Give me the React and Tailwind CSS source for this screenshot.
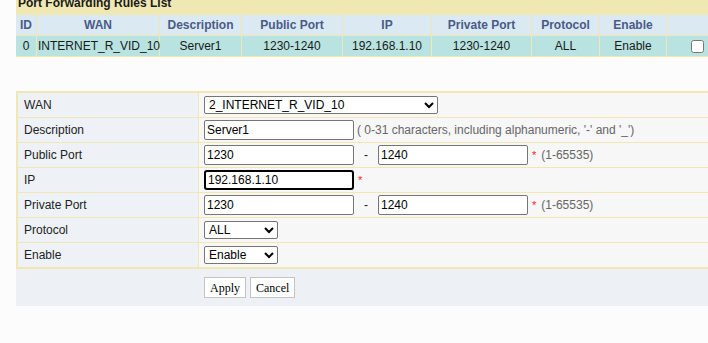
import React from 'react';

const cols = 'grid grid-cols-[21px_123px_82px_101px_89px_100px_68px_67px_60px]';
const heads = ['ID', 'WAN', 'Description', 'Public Port', 'IP', 'Private Port', 'Protocol', 'Enable', ''];
const cells = ['0', 'INTERNET_R_VID_10', 'Server1', '1230-1240', '192.168.1.10', '1230-1240', 'ALL', 'Enable'];

function Row({ label, children }) {
   return (
      <div className="grid grid-cols-[181px_1fr] h-[25px] border-b border-[#f0e7b4]">
         <div className="bg-[#eef2f7] border-r border-[#f0e7b4] flex items-center pl-[6px] text-[#222]">{label}</div>
         <div className="bg-[#f7f7f7] flex items-center pl-[5px]">{children}</div>
      </div>
   );
}

const input = 'h-[20px] bg-white border border-[#767676] rounded-[2px] px-[2px] text-[12px] text-black outline-none';
const select = 'h-[18px] bg-white border border-[#767676] rounded-[2px] text-[12px] text-black';

function Star() {
   return <span className="text-[#ff2020] text-[11px] ml-[4px] leading-none self-start mt-[7px]">*</span>;
}

export default function App() {
   return (
      <div className="min-h-screen w-full overflow-hidden bg-[#fcfcfc] text-[12px] text-[#1a1a1a]" style={{ fontFamily: '"Liberation Sans", Arial, sans-serif' }}>
         <div className="pl-[16px] w-[745px]">
            {/* --- Rules list --- */}
            <div className="bg-[#f0e8b3] h-[15px] overflow-hidden border-b border-[#f0e7b4]">
               <div className="font-bold leading-[14px] -mt-[4px] pl-[2px]">Port Forwarding Rules List</div>
            </div>
            <div className={`${cols} h-[21px] bg-[#dbeaf2] border-b border-[#f0e7b4] font-bold text-[#4a5a88]`}>
               {heads.map((h, i) => (
                  <div key={i} className="border-r border-[#f0e7b4] flex items-center justify-center">{h}</div>
               ))}
            </div>
            <div className={`${cols} h-[21px] bg-[#b9e3e1] border-b border-[#f0e7b4]`}>
               {cells.map((c, i) => (
                  <div key={i} className={`border-r border-[#f0e7b4] flex items-center ${i === 1 ? 'pl-[1px] whitespace-nowrap' : 'justify-center'}`}>{c}</div>
               ))}
               <div className="flex items-center justify-center">
                  <input type="checkbox" className="w-[13px] h-[13px] m-0" />
               </div>
            </div>

            {/* --- Edit form --- */}
            <div className="mt-[34px] border-t-2 border-l-2 border-[#f0e7b4]">
               <Row label="WAN">
                  <select className={`${select} w-[234px]`} defaultValue="2_INTERNET_R_VID_10">
                     <option>2_INTERNET_R_VID_10</option>
                  </select>
               </Row>
               <Row label="Description">
                  <input className={`${input} w-[150px]`} defaultValue="Server1" />
                  <span className="text-[#666] ml-[3px]">( 0-31 characters, including alphanumeric, '-' and '_')</span>
               </Row>
               <Row label="Public Port">
                  <input className={`${input} w-[150px]`} defaultValue="1230" />
                  <span className="mx-[10px]">-</span>
                  <input className={`${input} w-[150px]`} defaultValue="1240" />
                  <Star />
                  <span className="text-[#666] ml-[5px]">(1-65535)</span>
               </Row>
               <Row label="IP">
                  <input className={`${input} w-[150px] border-2 border-black rounded-[3px]`} defaultValue="192.168.1.10" />
                  <Star />
               </Row>
               <Row label="Private Port">
                  <input className={`${input} w-[150px]`} defaultValue="1230" />
                  <span className="mx-[10px]">-</span>
                  <input className={`${input} w-[150px]`} defaultValue="1240" />
                  <Star />
                  <span className="text-[#666] ml-[5px]">(1-65535)</span>
               </Row>
               <Row label="Protocol">
                  <select className={`${select} w-[74px]`} defaultValue="ALL">
                     <option>ALL</option>
                  </select>
               </Row>
               <Row label="Enable">
                  <select className={`${select} w-[74px]`} defaultValue="Enable">
                     <option>Enable</option>
                  </select>
               </Row>
            </div>
            <div className="border-t-2 border-[#f0e7b4] -mt-[1px] bg-[#edf1f5] h-[39px] flex items-center gap-[4px] pl-[188px]" style={{ fontFamily: '"Liberation Serif", "Times New Roman", serif' }}>
               <button className="h-[21px] px-[5px] bg-white border border-[#c4c4c4] text-[12px] text-black">Apply</button>
               <button className="h-[21px] px-[5px] bg-white border border-[#c4c4c4] text-[12px] text-black">Cancel</button>
            </div>
         </div>
      </div>
   );
}
